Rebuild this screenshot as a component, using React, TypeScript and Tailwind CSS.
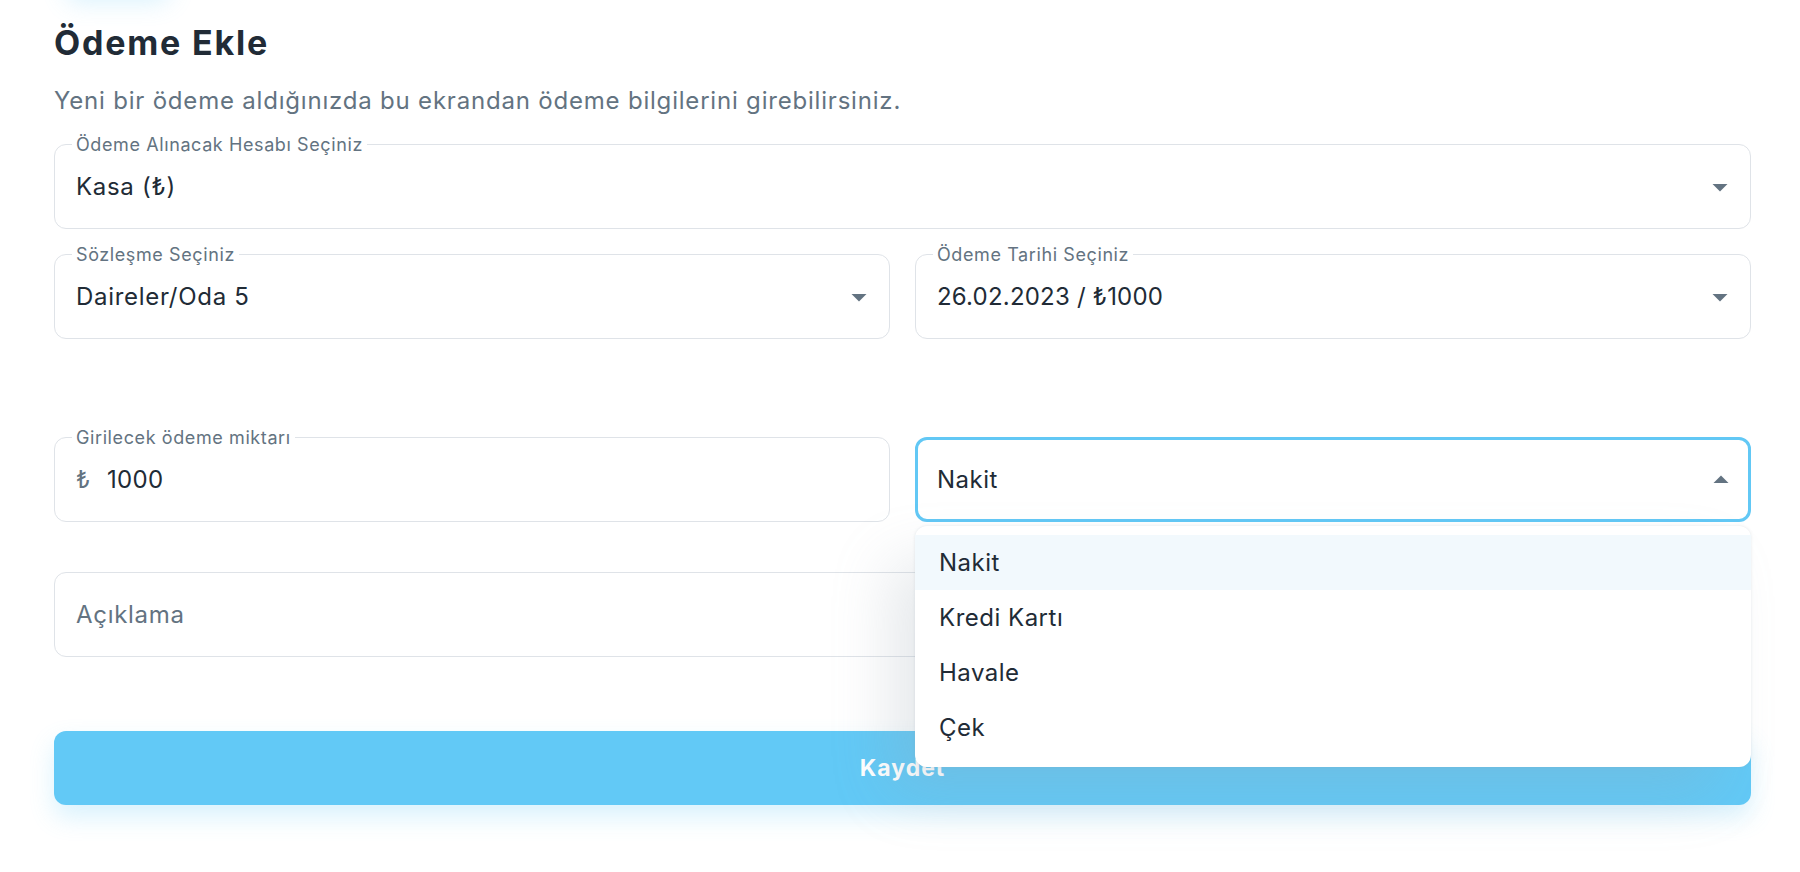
import React from "react";

function Caret({ up }: { up?: boolean }) {
  return (
    <svg viewBox="0 0 24 24" className="w-[36px] h-[36px] fill-[#637381] shrink-0">
      <path d={up ? "M7 14l5-5 5 5z" : "M7 10l5 5 5-5z"} />
    </svg>
  );
}

function Field({
  label,
  children,
  caret,
}: {
  label?: string;
  children: React.ReactNode;
  caret?: boolean;
}) {
  return (
    <div className="relative h-[85px] rounded-[12px] border border-[#dfe3e8] bg-white flex items-center pl-[21px] pr-[12px]">
      {label && (
        <span className="absolute left-[17px] top-0 -translate-y-1/2 bg-white px-[4px] text-[18px] leading-none tracking-[0.6px] text-[#637381] whitespace-nowrap">
          {label}
        </span>
      )}
      <div className="flex-1 flex items-center text-[24px] leading-none tracking-[0.7px] text-[#212b36]">{children}</div>
      {caret && <Caret />}
    </div>
  );
}

export default function App() {
  const items = ["Nakit", "Kredi Kartı", "Havale", "Çek"];
  return (
    <div className="relative min-h-screen bg-white overflow-hidden font-['Inter','Noto_Sans','DejaVu_Sans',sans-serif]">
      <div className="absolute left-[66px] -top-[70px] w-[104px] h-[60px] rounded-[12px] bg-white shadow-[0_12px_24px_0_rgba(98,201,246,0.24)]" />
      <div className="pl-[54px] pr-[49px] pt-[26px] pb-[60px]">
        <h1 className="text-[34px] leading-none font-bold tracking-[1.8px] text-[#212b36]">Ödeme Ekle</h1>
        <p className="mt-[29px] text-[24px] leading-none tracking-[0.8px] text-[#637381]">
          Yeni bir ödeme aldığınızda bu ekrandan ödeme bilgilerini girebilirsiniz.
        </p>

        <div className="mt-[31px]">
          <Field label="Ödeme Alınacak Hesabı Seçiniz" caret>
            Kasa (₺)
          </Field>
        </div>

        <div className="mt-[25px] grid grid-cols-2 gap-x-[25px]">
          <Field label="Sözleşme Seçiniz" caret>
            Daireler/Oda 5
          </Field>
          <Field label="Ödeme Tarihi Seçiniz" caret>
            <span className="tracking-[0.2px]">26.02.2023 / ₺1000</span>
          </Field>
        </div>

        <div className="mt-[98px] grid grid-cols-2 gap-x-[25px]">
          <Field label="Girilecek ödeme miktarı">
            <span className="text-[#637381] mr-[16px]">₺</span>
            <span className="tracking-[0.3px]">1000</span>
          </Field>
          <div className="relative">
            <div className="h-[85px] rounded-[12px] border-[3px] border-[#62c8f5] bg-white flex items-center pl-[19px] pr-[9px]">
              <div className="flex-1 text-[24px] leading-none tracking-[0.5px] text-[#212b36]">Nakit</div>
              <Caret up />
            </div>
            <div className="absolute left-0 right-0 top-full mt-[4px] z-10 rounded-[12px] bg-white pt-[9px] pb-[12px] shadow-[0_0_3px_0_rgba(145,158,171,0.24),-30px_30px_60px_-6px_rgba(145,158,171,0.24)]">
              {items.map((it, i) => (
                <div
                  key={it}
                  className={
                    "h-[55px] flex items-center pl-[24px] text-[24px] leading-none tracking-[0.5px] text-[#212b36] " +
                    (i === 0 ? "bg-[#f2f9fd]" : "")
                  }
                >
                  {it}
                </div>
              ))}
            </div>
          </div>
        </div>

        <div className="mt-[50px]">
          <Field>
            <span className="text-[#637381]">Açıklama</span>
          </Field>
        </div>

        <button className="mt-[74px] w-full h-[74px] rounded-[12px] bg-[#62c9f6] text-white text-[23px] font-bold tracking-[1px] shadow-[0_12px_24px_0_rgba(98,201,246,0.24)]">
          Kaydet
        </button>
      </div>
    </div>
  );
}
